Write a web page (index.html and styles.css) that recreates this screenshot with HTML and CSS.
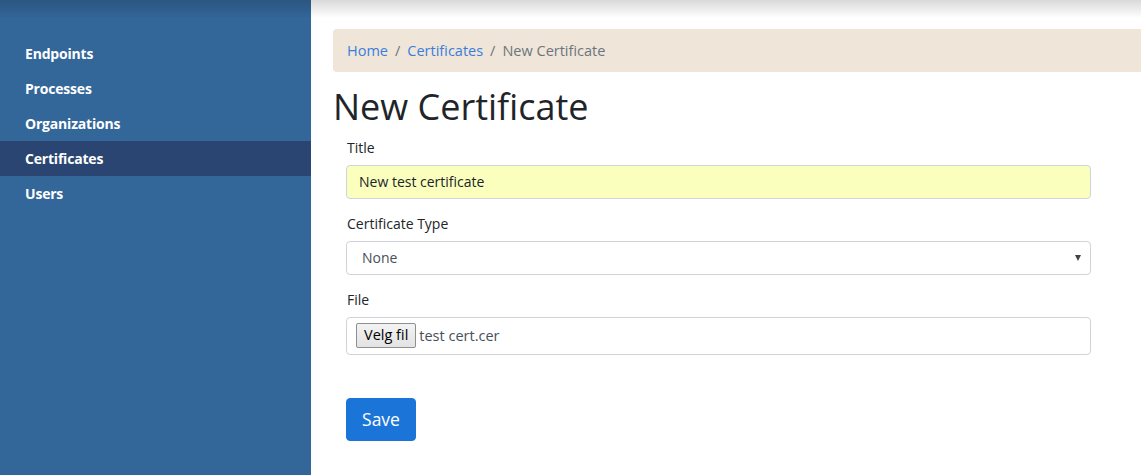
FILE: index.html
```html
<!DOCTYPE html>
<html lang="en">
<head>
<meta charset="utf-8">
<title>New Certificate</title>
<link rel="stylesheet" href="styles.css">
</head>
<body>
<div class="topshade"></div>
<div class="layout">
  <nav class="sidebar">
    <ul class="nav">
      <li class="nav-item"><a href="#">Endpoints</a></li>
      <li class="nav-item"><a href="#">Processes</a></li>
      <li class="nav-item"><a href="#">Organizations</a></li>
      <li class="nav-item active"><a href="#">Certificates</a></li>
      <li class="nav-item"><a href="#">Users</a></li>
    </ul>
  </nav>
  <main class="main">
    <ol class="breadcrumb">
      <li><a href="#">Home</a></li>
      <li class="sep">/</li>
      <li><a href="#">Certificates</a></li>
      <li class="sep">/</li>
      <li class="current">New Certificate</li>
    </ol>
    <h1 class="page-title">New Certificate</h1>
    <form class="form">
      <div class="form-group">
        <label class="label">Title</label>
        <div class="control control-autofill">New test certificate</div>
      </div>
      <div class="form-group">
        <label class="label">Certificate Type</label>
        <div class="control control-select"><span>None</span><span class="arrow"></span></div>
      </div>
      <div class="form-group">
        <label class="label">File</label>
        <div class="control control-file"><span class="file-btn">Velg fil</span><span class="file-name">test cert.cer</span></div>
      </div>
      <div class="actions">
        <button type="button" class="btn-save">Save</button>
      </div>
    </form>
  </main>
</div>
</body>
</html>
```

FILE: styles.css
```css
* { box-sizing: border-box; }
html, body { margin: 0; padding: 0; }
body {
  font-family: "Open Sans", "Liberation Sans", sans-serif;
  font-size: 14px;
  line-height: 1.5;
  color: #212529;
  background: #fff;
  height: 475px;
  overflow: hidden;
}
.topshade {
  position: fixed;
  left: 0; top: 0; right: 0;
  height: 18px;
  background: linear-gradient(to bottom, rgba(0,0,0,0.15), rgba(0,0,0,0));
  pointer-events: none;
  z-index: 5;
}
.layout {
  display: flex;
  height: 475px;
}
.sidebar {
  width: 311px;
  flex: 0 0 311px;
  background: #336699;
  padding-top: 36px;
}
.nav { list-style: none; margin: 0; padding: 0; }
.nav-item a {
  display: block;
  height: 35px;
  line-height: 35px;
  padding-left: 25px;
  color: #fff;
  font-weight: 700;
  font-size: 14px;
  text-decoration: none;
  letter-spacing: -0.2px;
}
.nav-item.active a { background: #2a4571; }
.main {
  flex: 1;
  padding: 29px 0 0 22px;
  min-width: 0;
}
.breadcrumb {
  display: flex;
  list-style: none;
  margin: 0;
  padding: 11px 14px;
  height: 43px;
  background: #efe5d8;
  border-radius: 4px 0 0 4px;
}
.breadcrumb li { font-size: 14.5px; line-height: 21px; }
.breadcrumb a { color: #3b7ddd; text-decoration: none; }
.breadcrumb .sep { color: #6c757d; padding: 0 7px; }
.breadcrumb .current { color: #6c757d; }
.page-title {
  margin: 12px 0 7px 0;
  font-size: 36px;
  font-weight: 400;
  line-height: 45.5px;
  color: #212529;
}
.form {
  padding: 0 50px 0 13px;
}
.form-group { margin-bottom: 14px; }
.label {
  display: block;
  font-size: 14px;
  line-height: 21px;
  margin-bottom: 7px;
  padding-left: 1px;
  color: #212529;
}
.control {
  display: flex;
  align-items: center;
  height: 34px;
  border: 1px solid #ced4da;
  border-radius: 4px;
  font-size: 14px;
  color: #495057;
  background: #fff;
}
.control-autofill {
  background: #faffbd;
  padding-left: 12px;
  color: #212529;
}
.control-select {
  padding: 0 9px 0 15px;
  justify-content: space-between;
}
.arrow {
  width: 0; height: 0;
  border-left: 3.5px solid transparent;
  border-right: 3.5px solid transparent;
  border-top: 6px solid #444;
  margin-top: 1px;
}
.control-file {
  height: 38px;
  padding-left: 9px;
}
.file-btn {
  display: inline-block;
  height: 25px;
  line-height: 22px;
  padding: 0 7px;
  border: 1px solid #8f8f8f;
  border-radius: 2px;
  background: linear-gradient(#f3f3f3, #e3e3e3);
  color: #000;
  font-size: 14.5px;
}
.file-name {
  margin-left: 3px;
  font-size: 14.5px;
  color: #495057;
}
.actions { padding-top: 29px; }
.btn-save {
  font-family: inherit;
  font-size: 17.5px;
  line-height: 26px;
  padding: 7px 14px;
  height: 43px;
  width: 70px;
  border: 1px solid #1b75d9;
  border-radius: 4px;
  background: #1b75d9;
  color: #fff;
  cursor: pointer;
}
```
